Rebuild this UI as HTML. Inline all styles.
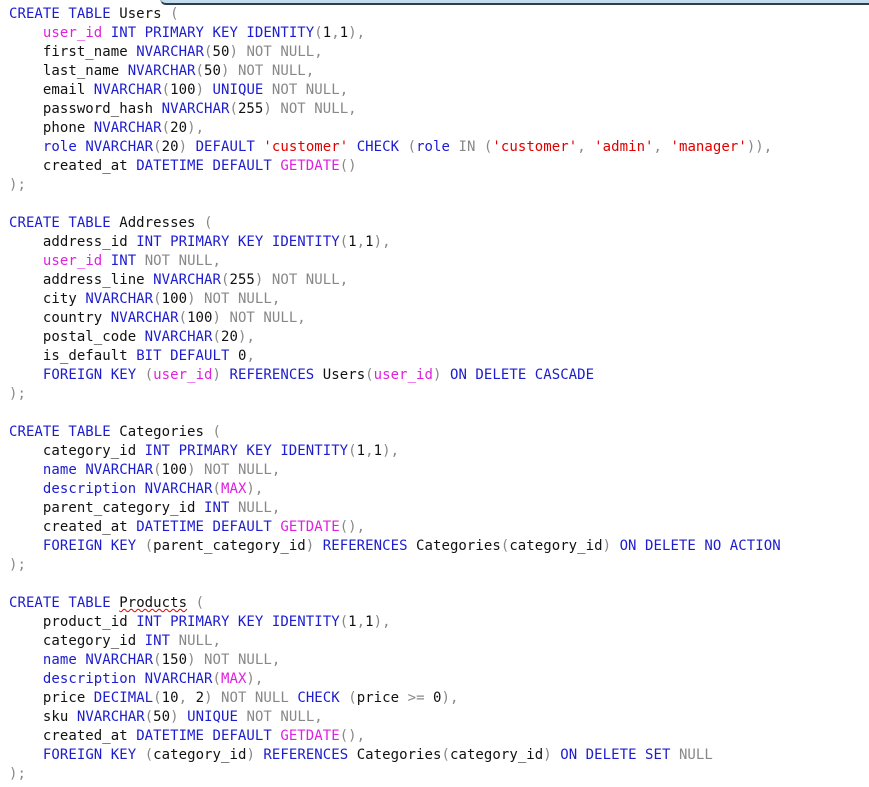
<!DOCTYPE html>
<html><head><meta charset="utf-8"><style>
body{margin:0;background:#fff;width:869px;height:787px;overflow:hidden;position:relative}
.bar{position:absolute;left:160px;top:-8px;width:720px;height:10px;background:#c5dcef;border:1px solid #8aa;border-bottom:2px solid #2b3f4f;border-radius:6px}
pre{margin:0;position:absolute;left:9px;top:5px;font-family:"DejaVu Sans Mono","Liberation Mono",monospace;font-size:14px;letter-spacing:0.05px;line-height:19px;color:#111}
.k{color:#1c1cd0}.g{color:#888}.m{color:#e020e0}.r{color:#e00000}
.u{text-decoration:underline wavy #e00000;text-decoration-thickness:1px}
</style></head><body><div class="bar"></div><pre><span class="k">CREATE TABLE</span> Users <span class="g">(</span>
    <span class="m">user_id</span> <span class="k">INT PRIMARY KEY IDENTITY</span><span class="g">(</span>1<span class="g">,</span>1<span class="g">),</span>
    first_name <span class="k">NVARCHAR</span><span class="g">(</span>50<span class="g">) NOT NULL,</span>
    last_name <span class="k">NVARCHAR</span><span class="g">(</span>50<span class="g">) NOT NULL,</span>
    email <span class="k">NVARCHAR</span><span class="g">(</span>100<span class="g">)</span> <span class="k">UNIQUE</span> <span class="g">NOT NULL,</span>
    password_hash <span class="k">NVARCHAR</span><span class="g">(</span>255<span class="g">) NOT NULL,</span>
    phone <span class="k">NVARCHAR</span><span class="g">(</span>20<span class="g">),</span>
    <span class="k">role NVARCHAR</span><span class="g">(</span>20<span class="g">)</span> <span class="k">DEFAULT</span> <span class="r">'customer'</span> <span class="k">CHECK</span> <span class="g">(</span><span class="k">role</span> <span class="g">IN (</span><span class="r">'customer'</span><span class="g">,</span> <span class="r">'admin'</span><span class="g">,</span> <span class="r">'manager'</span><span class="g">)),</span>
    created_at <span class="k">DATETIME DEFAULT</span> <span class="m">GETDATE</span><span class="g">()</span>
<span class="g">);</span>

<span class="k">CREATE TABLE</span> Addresses <span class="g">(</span>
    address_id <span class="k">INT PRIMARY KEY IDENTITY</span><span class="g">(</span>1<span class="g">,</span>1<span class="g">),</span>
    <span class="m">user_id</span> <span class="k">INT</span> <span class="g">NOT NULL,</span>
    address_line <span class="k">NVARCHAR</span><span class="g">(</span>255<span class="g">) NOT NULL,</span>
    city <span class="k">NVARCHAR</span><span class="g">(</span>100<span class="g">) NOT NULL,</span>
    country <span class="k">NVARCHAR</span><span class="g">(</span>100<span class="g">) NOT NULL,</span>
    postal_code <span class="k">NVARCHAR</span><span class="g">(</span>20<span class="g">),</span>
    is_default <span class="k">BIT DEFAULT</span> 0<span class="g">,</span>
    <span class="k">FOREIGN KEY</span> <span class="g">(</span><span class="m">user_id</span><span class="g">)</span> <span class="k">REFERENCES</span> Users<span class="g">(</span><span class="m">user_id</span><span class="g">)</span> <span class="k">ON DELETE CASCADE</span>
<span class="g">);</span>

<span class="k">CREATE TABLE</span> Categories <span class="g">(</span>
    category_id <span class="k">INT PRIMARY KEY IDENTITY</span><span class="g">(</span>1<span class="g">,</span>1<span class="g">),</span>
    <span class="k">name NVARCHAR</span><span class="g">(</span>100<span class="g">) NOT NULL,</span>
    <span class="k">description NVARCHAR</span><span class="g">(</span><span class="m">MAX</span><span class="g">),</span>
    parent_category_id <span class="k">INT</span> <span class="g">NULL,</span>
    created_at <span class="k">DATETIME DEFAULT</span> <span class="m">GETDATE</span><span class="g">(),</span>
    <span class="k">FOREIGN KEY</span> <span class="g">(</span>parent_category_id<span class="g">)</span> <span class="k">REFERENCES</span> Categories<span class="g">(</span>category_id<span class="g">)</span> <span class="k">ON DELETE NO ACTION</span>
<span class="g">);</span>

<span class="k">CREATE TABLE</span> <span class="u">Products</span> <span class="g">(</span>
    product_id <span class="k">INT PRIMARY KEY IDENTITY</span><span class="g">(</span>1<span class="g">,</span>1<span class="g">),</span>
    category_id <span class="k">INT</span> <span class="g">NULL,</span>
    <span class="k">name NVARCHAR</span><span class="g">(</span>150<span class="g">) NOT NULL,</span>
    <span class="k">description NVARCHAR</span><span class="g">(</span><span class="m">MAX</span><span class="g">),</span>
    price <span class="k">DECIMAL</span><span class="g">(</span>10<span class="g">,</span> 2<span class="g">) NOT NULL</span> <span class="k">CHECK</span> <span class="g">(</span>price <span class="g">&gt;=</span> 0<span class="g">),</span>
    sku <span class="k">NVARCHAR</span><span class="g">(</span>50<span class="g">)</span> <span class="k">UNIQUE</span> <span class="g">NOT NULL,</span>
    created_at <span class="k">DATETIME DEFAULT</span> <span class="m">GETDATE</span><span class="g">(),</span>
    <span class="k">FOREIGN KEY</span> <span class="g">(</span>category_id<span class="g">)</span> <span class="k">REFERENCES</span> Categories<span class="g">(</span>category_id<span class="g">)</span> <span class="k">ON DELETE SET</span> <span class="g">NULL</span>
<span class="g">);</span></pre></body></html>
